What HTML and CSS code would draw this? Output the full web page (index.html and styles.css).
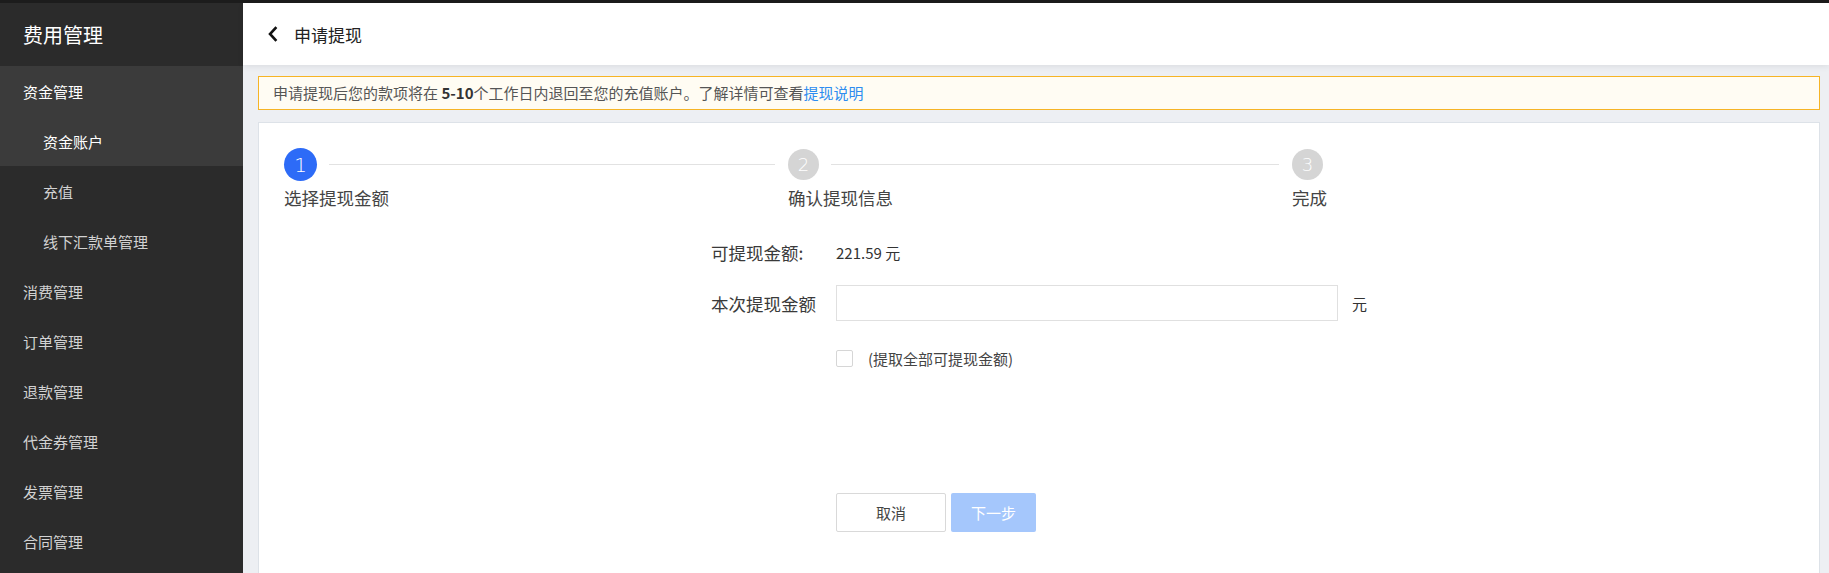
FILE: index.html
```html
<!DOCTYPE html>
<html lang="zh-CN">
<head>
<meta charset="utf-8">
<title>申请提现</title>
<link rel="stylesheet" href="styles.css">
</head>
<body>
<div class="topstrip"></div>
<div class="layout">
  <aside class="sidebar">
    <div class="side-title">费用管理</div>
    <div class="side-group">
      <div class="side-item active">资金管理</div>
      <div class="side-item sub active">资金账户</div>
    </div>
    <div class="side-item sub">充值</div>
    <div class="side-item sub">线下汇款单管理</div>
    <div class="side-item">消费管理</div>
    <div class="side-item">订单管理</div>
    <div class="side-item">退款管理</div>
    <div class="side-item">代金券管理</div>
    <div class="side-item">发票管理</div>
    <div class="side-item">合同管理</div>
  </aside>
  <main class="main">
    <header class="header">
      <svg class="back" width="12" height="16" viewBox="0 0 12 16"><polyline points="8.5,2 3,8 8.5,14" fill="none" stroke="#111" stroke-width="2.6" stroke-linecap="square"/></svg>
      <span class="header-title">申请提现</span>
    </header>
    <div class="content">
      <div class="notice">申请提现后您的款项将在 <b>5-10</b>个工作日内退回至您的充值账户。了解详情可查看<a class="link" href="#">提现说明</a></div>
      <section class="card">
        <div class="steps">
          <div class="step">
            <div class="step-head"><span class="step-num current">1</span><span class="step-line"></span></div>
            <div class="step-label">选择提现金额</div>
          </div>
          <div class="step">
            <div class="step-head"><span class="step-num">2</span><span class="step-line"></span></div>
            <div class="step-label">确认提现信息</div>
          </div>
          <div class="step last">
            <div class="step-head"><span class="step-num">3</span></div>
            <div class="step-label">完成</div>
          </div>
        </div>
        <div class="form">
          <div class="row row-first">
            <div class="label">可提现金额:</div>
            <div class="value">221.59 元</div>
          </div>
          <div class="row row-input">
            <div class="label">本次提现金额</div>
            <input class="input" type="text">
            <span class="unit">元</span>
          </div>
          <div class="row row-check">
            <div class="label"></div>
            <span class="checkbox"></span>
            <span class="check-text">(提取全部可提现金额)</span>
          </div>
          <div class="row row-buttons">
            <div class="label"></div>
            <button class="btn btn-cancel">取消</button>
            <button class="btn btn-next">下一步</button>
          </div>
        </div>
      </section>
    </div>
  </main>
</div>
</body>
</html>
```
FILE: styles.css
```css
* { box-sizing: border-box; }
html, body {
  margin: 0;
  padding: 0;
  width: 1829px;
  height: 573px;
  overflow: hidden;
  font-family: "Noto Sans CJK SC", "Noto Sans", sans-serif;
  background: #edeff3;
}
.topstrip {
  height: 3px;
  background: #1c1c1c;
}
.layout {
  display: flex;
  height: 570px;
}
.sidebar {
  width: 243px;
  flex: none;
  background: #2b2b2b;
  color: #d4d4d4;
}
.side-title {
  height: 63px;
  line-height: 63px;
  padding-left: 23px;
  font-size: 20px;
  color: #ffffff;
}
.side-group {
  background: #3b3b3b;
}
.side-item {
  height: 50px;
  padding-top: 3px;
  line-height: 46px;
  padding-left: 23px;
  font-size: 15px;
  color: #d2d2d2;
}
.side-item.sub {
  padding-left: 43px;
}
.side-item.active {
  color: #ffffff;
}
.main {
  flex: 1;
  display: flex;
  flex-direction: column;
  min-width: 0;
}
.header {
  height: 62px;
  flex: none;
  background: #ffffff;
  display: flex;
  align-items: center;
  padding-left: 24px;
  box-shadow: 0 2px 6px rgba(0, 0, 0, 0.07);
  position: relative;
  z-index: 1;
}
.back {
  margin-right: 15px;
}
.header-title {
  font-size: 17px;
  color: #222;
}
.content {
  flex: 1;
  padding: 11px 9px 0 15px;
  display: flex;
  flex-direction: column;
}
.notice {
  height: 34px;
  line-height: 32px;
  border: 1px solid #f6b425;
  background: #fffcf3;
  padding-left: 14px;
  font-size: 15px;
  color: #555;
}
.notice b {
  color: #333;
  font-weight: 700;
}
.link {
  color: #2d8cf0;
  text-decoration: none;
}
.card {
  margin-top: 12px;
  flex: 1;
  background: #ffffff;
  border: 1px solid #dde2e8;
  border-bottom: none;
}
.steps {
  display: flex;
  padding: 25px 0 0 25px;
}
.step {
  width: 504px;
  flex: none;
}
.step.last {
  width: auto;
}
.step-head {
  display: flex;
  align-items: center;
  height: 33px;
}
.step-num {
  width: 31px;
  height: 31px;
  border-radius: 50%;
  background: #d5d5d5;
  color: #ffffff;
  font-family: "DejaVu Sans", sans-serif;
  font-weight: 200;
  font-size: 18px;
  display: flex;
  align-items: center;
  justify-content: center;
  flex: none;
}
.step-num.current {
  width: 33px;
  height: 33px;
  background: #2d6bf7;
  font-size: 20px;
}
.step-line {
  flex: 1;
  height: 1px;
  background: #e2e2e2;
  margin: 0 13px 0 12px;
}
.step-label {
  margin-top: 5px;
  font-size: 17.5px;
  line-height: 24px;
  color: #444;
}
.form {
  width: 656px;
  margin: 24px auto 0;
}
.row {
  display: flex;
  align-items: center;
}
.label {
  width: 125px;
  flex: none;
  font-size: 17.5px;
  color: #3a3a3a;
}
.row-first {
  height: 36px;
}
.value {
  font-size: 15px;
  color: #333;
}
.row-input {
  height: 36px;
  margin-top: 15px;
}
.input {
  width: 502px;
  height: 36px;
  border: 1px solid #e0e0e0;
  border-radius: 0;
  outline: none;
  padding: 0 10px;
  font-size: 15px;
  background: #fff;
}
.unit {
  margin-left: 14px;
  font-size: 15px;
  color: #333;
}
.row-check {
  height: 30px;
  margin-top: 22px;
}
.checkbox {
  width: 17px;
  height: 17px;
  border: 1px solid #d6d6d6;
  border-radius: 2px;
  background: #fff;
  flex: none;
}
.check-text {
  margin-left: 15px;
  font-size: 15px;
  color: #444;
}
.row-buttons {
  margin-top: 120px;
}
.btn {
  height: 39px;
  font-family: inherit;
  font-size: 15px;
  border-radius: 2px;
  padding: 0;
  cursor: pointer;
}
.btn-cancel {
  width: 110px;
  border: 1px solid #d9d9d9;
  background: #fff;
  color: #444;
}
.btn-next {
  width: 85px;
  margin-left: 5px;
  border: none;
  background: #a5c7fc;
  color: #ffffff;
}
```
